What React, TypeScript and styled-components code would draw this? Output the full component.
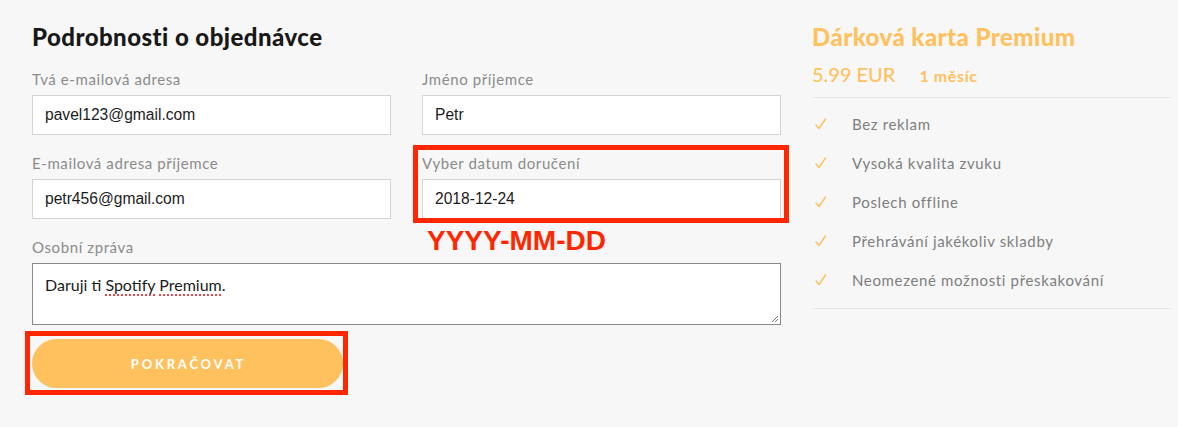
import React from "react";
import styled, { createGlobalStyle } from "styled-components";

const GlobalStyle = createGlobalStyle`
  html, body { margin: 0; padding: 0; background: #f7f7f7; }
  body { font-family: Lato, "Noto Sans", sans-serif; }
  * { box-sizing: border-box; }
`;

const ORANGE = "#ffc15e";
const RED = "#ff2600";

const Page = styled.div`
  display: flex;
  align-items: flex-start;
  padding: 22px 0 0 32px;
  width: 1178px;
  height: 427px;
  background: #f7f7f7;
`;

const FormColumn = styled.section`
  width: 750px;
  display: flex;
  flex-direction: column;
`;

const Title = styled.h2<{ $accent?: boolean }>`
  margin: 0;
  font-family: Lato, sans-serif;
  font-weight: 900;
  font-size: 24px;
  line-height: 30px;
  letter-spacing: 0.45px;
  color: ${(p) => (p.$accent ? ORANGE : "#181818")};
`;

const Grid = styled.div`
  display: grid;
  grid-template-columns: 359px 359px;
  column-gap: 31px;
  row-gap: 18px;
  margin-top: 17px;
`;

const Field = styled.div<{ $wide?: boolean }>`
  position: relative;
  display: flex;
  flex-direction: column;
  gap: 6px;
  grid-column: ${(p) => (p.$wide ? "1 / span 2" : "auto")};
`;

const Label = styled.label`
  font-family: Lato, sans-serif;
  font-size: 15px;
  line-height: 20px;
  letter-spacing: 0.6px;
  color: #8b8b8b;
`;

const Input = styled.div`
  height: 40px;
  background: #fff;
  border: 1px solid #d4d4d4;
  padding: 0 12px;
  display: flex;
  align-items: center;
  font-family: "Liberation Sans", Arial, sans-serif;
  font-size: 15.6px;
  color: #1c1c1c;
`;

const MessageBox = styled.div`
  position: relative;
  height: 62px;
  background: #fff;
  border: 1px solid #8a8a8a;
  padding: 11px 12px;
  font-family: Lato, sans-serif;
  font-size: 16px;
  line-height: 20px;
  color: #1c1c1c;
`;

const Misspelled = styled.span`
  text-decoration: underline dotted #e8474b;
  text-decoration-thickness: 2px;
  text-underline-offset: 3px;
`;

const Grip = styled.svg`
  position: absolute;
  right: 1px;
  bottom: 1px;
`;

const Annotation = styled.div<{ $t: number; $r: number; $b: number; $l: number }>`
  position: absolute;
  top: ${(p) => p.$t}px;
  right: ${(p) => p.$r}px;
  bottom: ${(p) => p.$b}px;
  left: ${(p) => p.$l}px;
  border: 5px solid ${RED};
  pointer-events: none;
`;

const FormatHint = styled.div`
  position: absolute;
  top: 74px;
  left: 5px;
  font-family: "Liberation Sans", Arial, sans-serif;
  font-weight: 700;
  font-size: 28px;
  line-height: 28px;
  color: ${RED};
  white-space: nowrap;
`;

const ButtonWrap = styled.div`
  position: relative;
  align-self: flex-start;
  margin-top: 14px;
`;

const Button = styled.button`
  width: 311px;
  height: 49px;
  border: none;
  border-radius: 25px;
  background: ${ORANGE};
  color: #fff;
  font-family: Lato, sans-serif;
  font-weight: 700;
  font-size: 13px;
  letter-spacing: 2.8px;
  display: flex;
  align-items: center;
  justify-content: center;
  padding: 0 0 0 2px;
`;

const Aside = styled.aside`
  width: 360px;
  margin-left: 30px;
  display: flex;
  flex-direction: column;
`;

const PriceRow = styled.div`
  display: flex;
  align-items: baseline;
  gap: 24px;
  margin-top: 9px;
  padding-bottom: 10px;
  border-bottom: 1px solid #e6e6e6;
  color: ${ORANGE};
`;

const Price = styled.span`
  font-family: Lato, sans-serif;
  font-size: 20px;
  line-height: 26px;
  font-weight: 500;
`;

const Period = styled.span`
  font-family: Lato, sans-serif;
  font-size: 16px;
  letter-spacing: 0.6px;
  font-weight: 700;
`;

const Features = styled.ul`
  list-style: none;
  margin: 0;
  padding: 16px 0 18px;
  display: flex;
  flex-direction: column;
  gap: 19px;
  border-bottom: 1px solid #e6e6e6;
`;

const Feature = styled.li`
  display: flex;
  align-items: center;
  font-family: Lato, sans-serif;
  font-size: 15px;
  line-height: 20px;
  letter-spacing: 0.65px;
  color: #7e7e7e;
`;

const CheckCell = styled.span`
  width: 40px;
  display: flex;
  align-items: center;
  padding-left: 3px;
`;

const Check = () => (
  <svg width="12" height="12" viewBox="0 0 12 12" fill="none">
    <path d="M1 7 L4 10.5 L10.5 1" stroke={ORANGE} strokeWidth="1.5" strokeLinecap="round" strokeLinejoin="round" />
  </svg>
);

const features = [
  "Bez reklam",
  "Vysoká kvalita zvuku",
  "Poslech offline",
  "Přehrávání jakékoliv skladby",
  "Neomezené možnosti přeskakování",
];

export default function App() {
  return (
    <>
      <GlobalStyle />
      <Page>
        <FormColumn>
          <Title>Podrobnosti o objednávce</Title>
          <Grid>
            <Field>
              <Label>Tvá e-mailová adresa</Label>
              <Input>pavel123@gmail.com</Input>
            </Field>
            <Field>
              <Label>Jméno příjemce</Label>
              <Input>Petr</Input>
            </Field>
            <Field>
              <Label>E-mailová adresa příjemce</Label>
              <Input>petr456@gmail.com</Input>
            </Field>
            <Field>
              <Label>Vyber datum doručení</Label>
              <Input>2018-12-24</Input>
              <Annotation $t={-8} $r={-8} $b={-4} $l={-9} />
              <FormatHint>YYYY-MM-DD</FormatHint>
            </Field>
            <Field $wide>
              <Label>Osobní zpráva</Label>
              <MessageBox>
                Daruji ti <Misspelled>Spotify</Misspelled> <Misspelled>Premium</Misspelled>.
                <Grip width="8" height="8" viewBox="0 0 8 8">
                  <path d="M7 1 L1 7 M7 4 L4 7" stroke="#777" strokeWidth="1" />
                </Grip>
              </MessageBox>
            </Field>
          </Grid>
          <ButtonWrap>
            <Button>POKRAČOVAT</Button>
            <Annotation $t={-8} $r={-5} $b={-7} $l={-7} />
          </ButtonWrap>
        </FormColumn>
        <Aside>
          <Title $accent>Dárková karta Premium</Title>
          <PriceRow>
            <Price>5.99 EUR</Price>
            <Period>1 měsíc</Period>
          </PriceRow>
          <Features>
            {features.map((f) => (
              <Feature key={f}>
                <CheckCell>
                  <Check />
                </CheckCell>
                {f}
              </Feature>
            ))}
          </Features>
        </Aside>
      </Page>
    </>
  );
}
